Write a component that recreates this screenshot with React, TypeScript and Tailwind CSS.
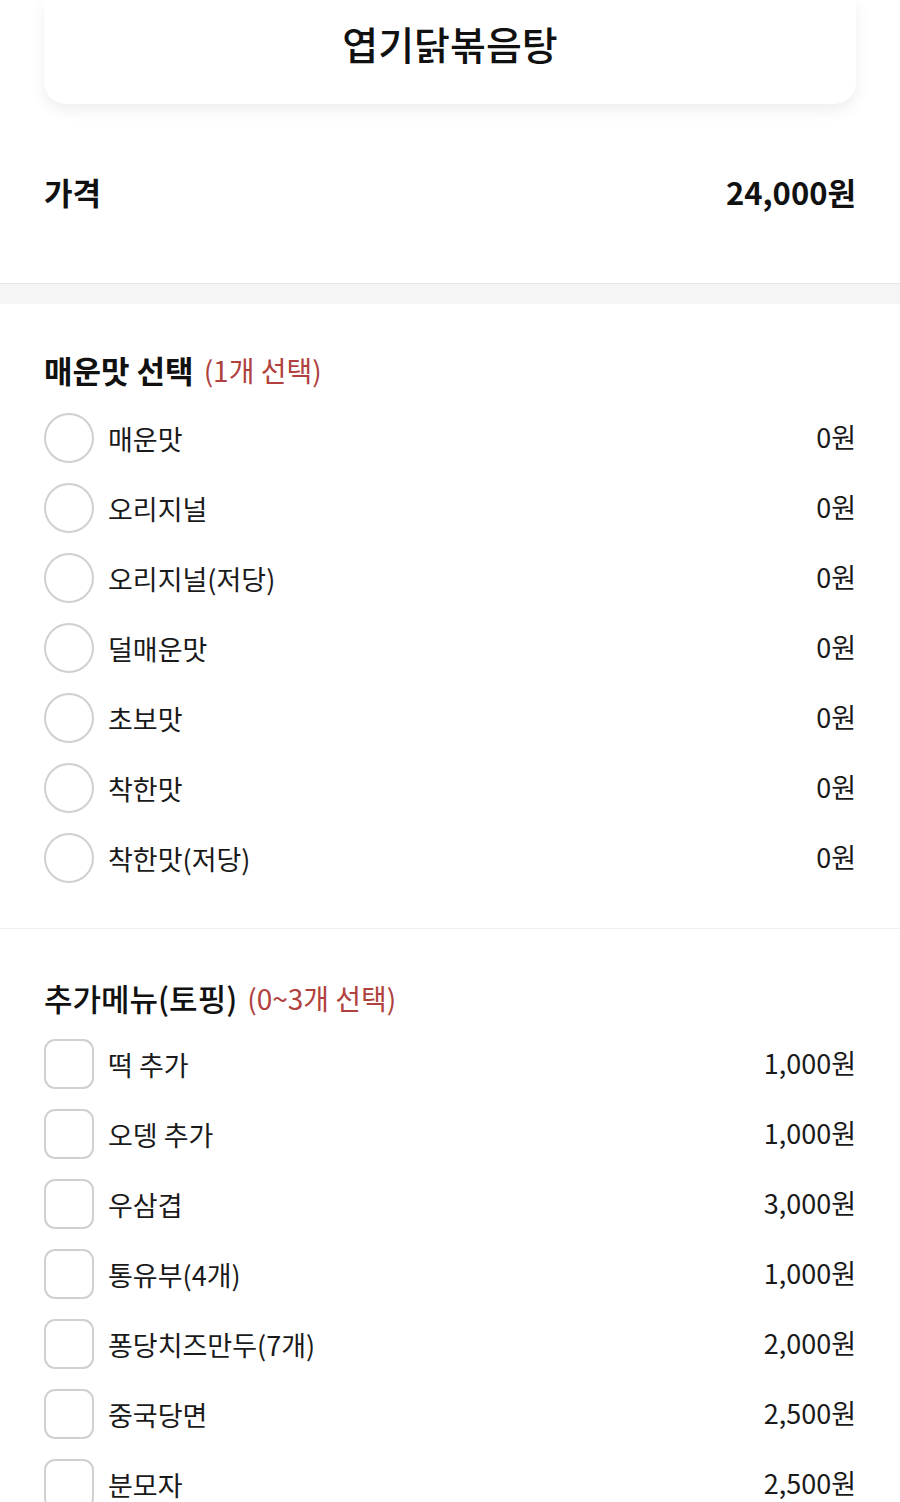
import React from "react";

const font = { fontFamily: '"Noto Sans CJK KR", "Noto Sans", sans-serif' };

const spicy = ["매운맛", "오리지널", "오리지널(저당)", "덜매운맛", "초보맛", "착한맛", "착한맛(저당)"];
const toppings: [string, string][] = [
  ["떡 추가", "1,000원"],
  ["오뎅 추가", "1,000원"],
  ["우삼겹", "3,000원"],
  ["통유부(4개)", "1,000원"],
  ["퐁당치즈만두(7개)", "2,000원"],
  ["중국당면", "2,500원"],
  ["분모자", "2,500원"],
];

function Row({ label, price, box }: { label: string; price: string; box: "radio" | "check" }) {
  return (
    <div className="flex h-[70px] items-center">
      <div
        className={
          box === "radio"
            ? "h-[50px] w-[50px] shrink-0 rounded-full border-2 border-[#d0d0d0] bg-white"
            : "h-[50px] w-[50px] shrink-0 rounded-[11px] border-2 border-[#d0d0d0] bg-white"
        }
      />
      <span className="ml-[14px] text-[27px] leading-none text-[#1a1a1a]">{label}</span>
      <span className="ml-auto -translate-y-[2px] text-[27px] leading-none text-[#1a1a1a]">{price}</span>
    </div>
  );
}

export default function App() {
  return (
    <div className="h-[1502px] w-[900px] overflow-hidden bg-white" style={font}>
      <div className="px-[44px]">
        <div className="flex h-[104px] justify-center rounded-b-[22px] bg-white pt-[17px] shadow-[0_6px_16px_rgba(0,0,0,0.07)]">
          <h1 className="text-[39px] font-medium leading-[52px] text-[#111]">엽기닭볶음탕</h1>
        </div>
      </div>
      <div className="flex h-[179px] items-center justify-between px-[44px] pb-[2px]">
        <span className="text-[31px] font-bold text-[#111]">가격</span>
        <span className="text-[31px] font-bold text-[#111]">24,000원</span>
      </div>
      <div className="h-[21px] border-t border-[#e6e6e6] bg-[#f5f5f5]" />
      <section className="px-[44px] pt-[46px] pb-[35px]">
        <div className="flex h-[40px] items-center">
          <span className="text-[31px] font-semibold text-[#111]">매운맛 선택</span>
          <span className="ml-[10px] text-[28px] text-[#b0413e]">(1개 선택)</span>
        </div>
        <div className="mt-[13px]">
          {spicy.map((s) => (
            <Row key={s} label={s} price="0원" box="radio" />
          ))}
        </div>
      </section>
      <div className="h-px bg-[#efefef]" />
      <section className="px-[44px] pt-[49px]">
        <div className="flex h-[40px] items-center">
          <span className="text-[31px] font-medium text-[#111]">추가메뉴(토핑)</span>
          <span className="ml-[10px] text-[28px] text-[#b0413e]">(0~3개 선택)</span>
        </div>
        <div className="mt-[11px]">
          {toppings.map(([l, p]) => (
            <Row key={l} label={l} price={p} box="check" />
          ))}
        </div>
      </section>
    </div>
  );
}
